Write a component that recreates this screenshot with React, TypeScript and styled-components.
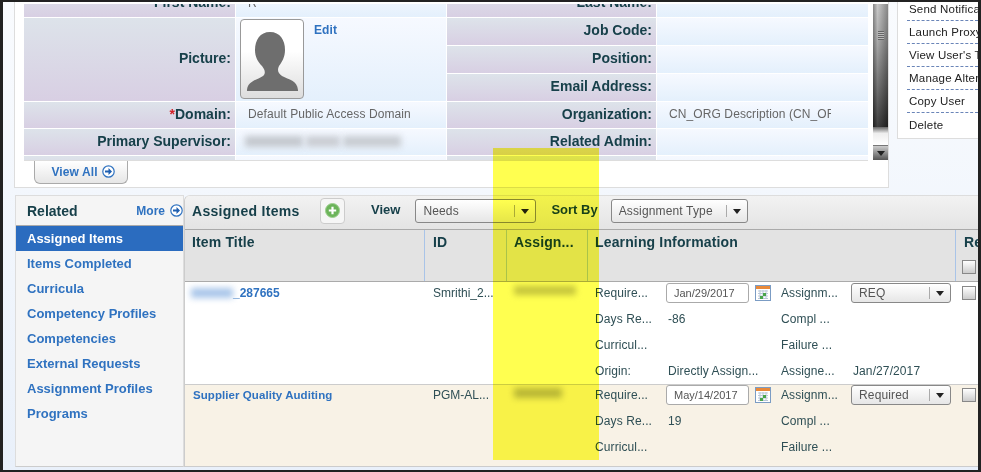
import React, { FunctionComponent } from 'react';
import styled, { createGlobalStyle } from 'styled-components';

const GlobalStyle = createGlobalStyle`
    html, body {
        margin: 0;
        padding: 0;
        background: #222;
    }
    body {
        font-family: 'Liberation Sans', Arial, sans-serif;
    }
`;

const Frame = styled.div`
    position: relative;
    width: 981px;
    height: 472px;
    padding: 2px 3px 2px 3px;
    box-sizing: border-box;
    overflow: hidden;
    background: #222;
`;
const Shell = styled.div`
    height: 468px;
    overflow: hidden;
    background: linear-gradient(#f9fbfe, #f0f5fc 60%, #e9f0fa);
`;
const Highlight = styled.div`
    position: absolute;
    left: 493px;
    top: 148px;
    width: 106px;
    height: 312px;
    background: #ffff50;
    mix-blend-mode: multiply;
    pointer-events: none;
`;

/* top part */
const TopSection = styled.div`
    display: flex;
    padding-left: 11px;
`;
const DetailPanel = styled.div`
    width: 875px;
    height: 186px;
    box-sizing: border-box;
    padding: 2px 0 0 9px;
    background: #fff;
    border: 1px solid #ddd;
    border-top: 0;
`;
const ScrollRow = styled.div`
    display: flex;
    gap: 5px;
`;
const FormViewport = styled.div`
    width: 844px;
    height: 157px;
    box-sizing: border-box;
    overflow: hidden;
    border-bottom: 1px solid #ddd;
`;
const FormGrid = styled.div`
    margin-top: -14px;
    display: grid;
    grid-template-columns: 211px 210px 209px 211px;
    grid-template-rows: repeat(4, 27px) 26px 26px 26px;
    gap: 1px;
    background: #fff;
`;
const LabelCell = styled.div<{ $span?: number; $tall?: boolean }>`
    grid-row: span ${(p) => p.$span || 1};
    display: flex;
    align-items: center;
    justify-content: flex-end;
    padding: 0 4px ${(p) => (p.$tall ? '4px' : '2px')} 0;
    font-size: 14px;
    font-weight: bold;
    color: #17404a;
    background: linear-gradient(#dde3ea, #d8cfe3);
`;
const ValueCell = styled.div<{ $span?: number }>`
    grid-row: span ${(p) => p.$span || 1};
    display: flex;
    align-items: center;
    padding: 0 0 2px 12px;
    font-size: 12px;
    letter-spacing: 0.1px;
    color: #666;
    background: linear-gradient(#f6f9ff, #e4f0fc);
`;
const PictureCell = styled(ValueCell)`
    align-items: flex-start;
    padding: 1px 0 0 4px;
    gap: 10px;
`;
const Clipped = styled.span<{ $w: number }>`
    display: block;
    width: ${(p) => p.$w}px;
    overflow: hidden;
    white-space: nowrap;
`;
const Required = styled.span`
    color: #d3232a;
`;
const AvatarFrame = styled.div`
    width: 64px;
    height: 80px;
    box-sizing: border-box;
    border: 1px solid #999;
    border-radius: 4px;
    background: linear-gradient(#fff 40%, #ddd);
    overflow: hidden;
`;
const EditLink = styled.a`
    margin-top: 4px;
    font-size: 12px;
    font-weight: bold;
    color: #2f72c0;
`;
const BlurGroup = styled.div`
    display: flex;
    gap: 3px;
    margin-left: -3px;
`;
const Blur = styled.div<{ $w: number; $h: number; $c: string }>`
    width: ${(p) => p.$w}px;
    height: ${(p) => p.$h}px;
    flex: none;
    background: ${(p) => p.$c};
    filter: blur(3px);
`;
const Scrollbar = styled.div`
    width: 15px;
    height: 156px;
    display: flex;
    flex-direction: column;
`;
const ScrollThumb = styled.div`
    flex: 1;
    padding-top: 27px;
    background: linear-gradient(90deg, rgba(0, 0, 0, 0.3), rgba(255, 255, 255, 0.1) 30%, rgba(0, 0, 0, 0.3)),
        linear-gradient(#c4c4c4, #a0a0a0 30%, #666 65%, #2a2a2a 100%);
`;
const Grip = styled.div`
    width: 6px;
    height: 9px;
    margin-left: 5px;
    background: repeating-linear-gradient(#666 0 1px, #bbb 1px 2px);
`;
const ScrollTrack = styled.div`
    height: 18px;
    background: linear-gradient(#666, #eee 35%, #fff);
`;
const ScrollButton = styled.div`
    height: 15px;
    display: flex;
    align-items: center;
    justify-content: center;
    background: linear-gradient(#ccc, #555);
    border-top: 1px solid #777;
    box-sizing: border-box;
`;
const ViewAllButton = styled.div`
    width: 94px;
    height: 23px;
    box-sizing: border-box;
    margin-left: 10px;
    display: flex;
    align-items: center;
    justify-content: center;
    gap: 4px;
    padding: 0 0 1px 4px;
    border: 1px solid #aaa;
    border-top: 0;
    border-radius: 0 0 6px 6px;
    background: linear-gradient(#fff, #e6e6e6);
    font-size: 12px;
    font-weight: bold;
    letter-spacing: 0.1px;
    color: #2f72c0;
`;
const ActionMenu = styled.div`
    flex: 1;
    margin-left: 8px;
    height: 137px;
    box-sizing: border-box;
    padding-left: 9px;
    background: #fff;
    border-left: 1px solid #ddd;
    border-bottom: 1px solid #ddd;
    overflow: hidden;
`;
const ActionItem = styled.div`
    height: 23px;
    box-sizing: border-box;
    padding-left: 2px;
    display: flex;
    align-items: center;
    font-size: 11.5px;
    letter-spacing: 0.2px;
    white-space: nowrap;
    color: #222;
    border-bottom: 1px dashed #6a85b8;
    &:first-child {
        margin-top: -4px;
    }
    &:last-child {
        border-bottom: 0;
    }
`;

/* lower part */
const LowerSection = styled.div`
    display: flex;
    margin: 7px 0 0 12px;
    height: 272px;
`;
const SidePanel = styled.div`
    width: 169px;
    flex: none;
    box-sizing: border-box;
    background: #f5f5f5;
    border: 1px solid #ddd;
    border-bottom: 1px solid #ccc;
`;
const SideHeader = styled.div`
    height: 30px;
    box-sizing: border-box;
    padding: 0 0 0 11px;
    display: flex;
    align-items: center;
    justify-content: space-between;
    border-bottom: 1px solid #aaa;
`;
const SideTitle = styled.span`
    font-size: 14px;
    font-weight: bold;
    color: #17404a;
`;
const MoreLink = styled.span`
    display: flex;
    align-items: center;
    gap: 5px;
    font-size: 12px;
    font-weight: bold;
    color: #2f72c0;
`;
const SideLink = styled.div<{ $active?: boolean }>`
    height: 25px;
    padding-left: 11px;
    display: flex;
    align-items: center;
    font-size: 13px;
    font-weight: bold;
    color: ${(p) => (p.$active ? '#fff' : '#2f72c0')};
    background: ${(p) => (p.$active ? '#2b6cbf' : 'transparent')};
`;
const MainPanel = styled.div`
    flex: 1;
    min-width: 0;
    overflow: hidden;
    border-top: 1px solid #ddd;
    border-bottom: 1px solid #ccc;
    border-left: 1px solid #ccc;
    border-radius: 6px 0 0 0;
    background: #f8f2e6;
`;
const Toolbar = styled.div`
    height: 34px;
    box-sizing: border-box;
    display: flex;
    align-items: center;
    padding: 0 0 4px 7px;
    background: linear-gradient(#f2f2f2, #e4e4e4);
    border-bottom: 1px solid #aaa;
`;
const ToolbarTitle = styled.span`
    width: 128px;
    flex: none;
    font-size: 14px;
    font-weight: bold;
    letter-spacing: 0.3px;
    color: #17404a;
`;
const AddButton = styled.div`
    width: 25px;
    height: 26px;
    box-sizing: border-box;
    flex: none;
    display: flex;
    align-items: center;
    justify-content: center;
    background: #f6f6f6;
    border: 1px solid #ccc;
    border-radius: 4px;
`;
const ToolbarLabel = styled.span<{ $left: number; $right: number }>`
    margin: 0 ${(p) => p.$right}px 0 ${(p) => p.$left}px;
    padding-bottom: 3px;
    font-size: 13px;
    font-weight: bold;
    color: #17404a;
`;
const DropField = styled.div<{ $w: number; $h: number; $dividerAt: number }>`
    width: ${(p) => p.$w}px;
    height: ${(p) => p.$h}px;
    box-sizing: border-box;
    flex: none;
    display: grid;
    grid-template-columns: ${(p) => p.$dividerAt}px 1fr;
    align-items: center;
    padding-left: 7px;
    font-size: 12px;
    letter-spacing: 0.15px;
    color: #555;
    background: linear-gradient(#fff, #e6e6e6);
    border: 1px solid #888;
    border-radius: 3px;
`;
const DropArrow = styled.span`
    height: 12px;
    border-left: 1px solid #aaa;
    display: flex;
    align-items: center;
    justify-content: center;
    &::after {
        content: '';
        border-left: 4px solid transparent;
        border-right: 4px solid transparent;
        border-top: 5px solid #222;
        margin-top: 1px;
    }
`;
const ScrollArrow = styled(DropArrow)`
    border-left: 0;
`;

const columns = '240px 82px 81px 368px 1fr';

const HeadRow = styled.div`
    height: 52px;
    box-sizing: border-box;
    display: grid;
    grid-template-columns: ${columns};
    background: #e3e3e3;
    border-bottom: 1px solid #aaa;
`;
const HeadCell = styled.div<{ $last?: boolean }>`
    padding: 4px 0 0 7px;
    font-size: 14px;
    font-weight: bold;
    letter-spacing: 0.15px;
    color: #17404a;
    overflow: hidden;
    white-space: nowrap;
    border-right: ${(p) => (p.$last ? '0' : '1px solid #a9c4e8')};
    &:nth-child(2),
    &:last-child {
        padding-left: 8px;
    }
`;
const Tick = styled.div`
    width: 14px;
    height: 14px;
    box-sizing: border-box;
    background: linear-gradient(#fff, #ccc);
    border: 1px solid #888;
`;
const HeadTick = styled(Tick)`
    margin: 10px 0 0 -2px;
`;
const DataRow = styled.div<{ $tint?: boolean; $h: number }>`
    height: ${(p) => p.$h}px;
    overflow: hidden;
    display: grid;
    grid-template-columns: ${columns};
    background: ${(p) => (p.$tint ? '#f8f2e6' : '#fff')};
    box-shadow: ${(p) => (p.$tint ? 'inset 0 1px 0 #ccc' : 'none')};
`;
const DataCell = styled.div`
    padding: 4px 0 0 7px;
    font-size: 12px;
    line-height: 14px;
    color: #2f4f55;
    white-space: nowrap;
    overflow: hidden;
    &:nth-child(2) {
        padding-left: 8px;
    }
`;
const TitleLink = styled.a<{ $small?: boolean }>`
    display: flex;
    align-items: center;
    padding-left: 1px;
    font-size: ${(p) => (p.$small ? '11.5px' : '12px')};
    letter-spacing: ${(p) => (p.$small ? '0.07px' : '0')};
    font-weight: bold;
    color: #2f72c0;
`;
const TitleBlur = styled(Blur)`
    margin-left: -2px;
`;
const InfoCell = styled.div`
    margin-top: -2px;
    padding-left: 7px;
    display: grid;
    grid-template-columns: 71px 115px 70px 100px;
    grid-auto-rows: 26px;
    align-items: center;
    font-size: 12px;
    letter-spacing: 0.1px;
    color: #2f4f55;
    white-space: nowrap;
`;
const InfoValue = styled.span`
    padding-left: 2px;
`;
const DateGroup = styled.div`
    display: flex;
    align-items: center;
    gap: 6px;
`;
const DateInput = styled.div`
    width: 83px;
    height: 20px;
    box-sizing: border-box;
    padding-left: 7px;
    display: flex;
    align-items: center;
    font-size: 11px;
    letter-spacing: 0;
    background: #fff;
    border: 1px solid #aaa;
    border-radius: 3px;
    color: #555;
`;
const TickCell = styled.div`
    padding: 4px 0 0 6px;
`;

const ArrowCircle: FunctionComponent<{ size?: number }> = ({ size = 13 }) => (
    <svg width={size} height={size} viewBox='0 0 13 13'>
        <circle cx='6.5' cy='6.5' r='5.7' fill='#fff' stroke='#2f72c0' strokeWidth='1.2' />
        <path d='M3 5.5h3.5V3l3.5 3.5L6.5 10V7.5H3z' fill='#1f5fb0' />
    </svg>
);

const Silhouette: FunctionComponent = () => (
    <svg width='62' height='78' viewBox='0 0 62 78'>
        <path
            d='M29 12C39 12 44 20 44 30C44 37 41 42 38 46C36 50 37 53 41 56C48 60 56 60 57 70V71H6V70C7 61 16 60 22 56C25 53 24 50 21 46C17 42 14 37 14 30C14 20 19 12 29 12Z'
            fill='#6e6e6e'
        />
    </svg>
);

const CalendarIcon: FunctionComponent = () => (
    <svg width='16' height='16' viewBox='0 0 16 16'>
        <rect x='0.5' y='0.5' width='15' height='15' fill='#fff' stroke='#7b9cc4' />
        <rect x='1' y='1' width='14' height='3' fill='#e8893a' />
        <path d='M3 6h10M3 8.5h10M3 11h10M3 13.5h10M5 5v9M8 5v9M11 5v9' stroke='#b9c7d8' />
        <rect x='8' y='8' width='3' height='3' fill='#4aa54a' />
        <rect x='5' y='11' width='3' height='3' fill='#4aa54a' />
    </svg>
);

const PlusIcon: FunctionComponent = () => (
    <svg width='15' height='15' viewBox='0 0 15 15'>
        <circle cx='7.5' cy='7.5' r='7' fill='#6cb45a' stroke='#9ccf8e' />
        <path d='M7.5 3.8v7.4M3.8 7.5h7.4' stroke='#fff' strokeWidth='2.2' />
    </svg>
);

const sideLinks = [
    'Assigned Items',
    'Items Completed',
    'Curricula',
    'Competency Profiles',
    'Competencies',
    'External Requests',
    'Assignment Profiles',
    'Programs',
];
const actions = ['Send Notifica', 'Launch Proxy', "View User's T", 'Manage Alter', 'Copy User', 'Delete'];

interface LearningProps {
    date: string;
    days: string;
    type: string;
    origin?: boolean;
}

const LearningInfo: FunctionComponent<LearningProps> = ({ date, days, type, origin }) => (
    <InfoCell>
        <span>Require...</span>
        <DateGroup>
            <DateInput>{date}</DateInput>
            <CalendarIcon />
        </DateGroup>
        <span>Assignm...</span>
        <DropField $w={100} $h={20} $dividerAt={70}>
            <span>{type}</span>
            <DropArrow />
        </DropField>
        <span>Days Re...</span>
        <InfoValue>{days}</InfoValue>
        <span>Compl ...</span>
        <span />
        <span>Curricul...</span>
        <span />
        <span>Failure ...</span>
        <span />
        {origin && (
            <>
                <span>Origin:</span>
                <InfoValue>Directly Assign...</InfoValue>
                <span>Assigne...</span>
                <InfoValue>Jan/27/2017</InfoValue>
            </>
        )}
    </InfoCell>
);

const App: FunctionComponent = () => {
    return (
        <Frame>
            <GlobalStyle />
            <Shell>
                <TopSection>
                    <DetailPanel>
                        <ScrollRow>
                            <FormViewport>
                                <FormGrid>
                                    <LabelCell $tall>First Name:</LabelCell>
                                    <ValueCell>R</ValueCell>
                                    <LabelCell $tall>Last Name:</LabelCell>
                                    <ValueCell>'</ValueCell>

                                    <LabelCell $span={3} $tall>
                                        Picture:
                                    </LabelCell>
                                    <PictureCell $span={3}>
                                        <AvatarFrame>
                                            <Silhouette />
                                        </AvatarFrame>
                                        <EditLink>Edit</EditLink>
                                    </PictureCell>
                                    <LabelCell $tall>Job Code:</LabelCell>
                                    <ValueCell />
                                    <LabelCell $tall>Position:</LabelCell>
                                    <ValueCell />
                                    <LabelCell $tall>Email Address:</LabelCell>
                                    <ValueCell />

                                    <LabelCell>
                                        <Required>*</Required>Domain:
                                    </LabelCell>
                                    <ValueCell>
                                        <Clipped $w={162}>Default Public Access Domain</Clipped>
                                    </ValueCell>
                                    <LabelCell>Organization:</LabelCell>
                                    <ValueCell>
                                        <Clipped $w={162}>CN_ORG Description (CN_OR</Clipped>
                                    </ValueCell>

                                    <LabelCell>Primary Supervisor:</LabelCell>
                                    <ValueCell>
                                        <BlurGroup>
                                            <Blur $w={58} $h={11} $c='#c4c8ce' />
                                            <Blur $w={34} $h={11} $c='#cacdd3' />
                                            <Blur $w={58} $h={11} $c='#c8ccd2' />
                                        </BlurGroup>
                                    </ValueCell>
                                    <LabelCell>Related Admin:</LabelCell>
                                    <ValueCell />

                                    <LabelCell />
                                    <ValueCell />
                                    <LabelCell />
                                    <ValueCell />
                                </FormGrid>
                            </FormViewport>
                            <Scrollbar>
                                <ScrollThumb>
                                    <Grip />
                                </ScrollThumb>
                                <ScrollTrack />
                                <ScrollButton>
                                    <ScrollArrow />
                                </ScrollButton>
                            </Scrollbar>
                        </ScrollRow>
                        <ViewAllButton>
                            View All <ArrowCircle />
                        </ViewAllButton>
                    </DetailPanel>
                    <ActionMenu>
                        {actions.map((a) => (
                            <ActionItem key={a}>{a}</ActionItem>
                        ))}
                    </ActionMenu>
                </TopSection>

                <LowerSection>
                    <SidePanel>
                        <SideHeader>
                            <SideTitle>Related</SideTitle>
                            <MoreLink>
                                More <ArrowCircle />
                            </MoreLink>
                        </SideHeader>
                        {sideLinks.map((l, i) => (
                            <SideLink key={l} $active={i === 0}>
                                {l}
                            </SideLink>
                        ))}
                    </SidePanel>
                    <MainPanel>
                        <Toolbar>
                            <ToolbarTitle>Assigned Items</ToolbarTitle>
                            <AddButton>
                                <PlusIcon />
                            </AddButton>
                            <ToolbarLabel $left={26} $right={15}>
                                View
                            </ToolbarLabel>
                            <DropField $w={121} $h={24} $dividerAt={91}>
                                <span>Needs</span>
                                <DropArrow />
                            </DropField>
                            <ToolbarLabel $left={15} $right={13}>
                                Sort By
                            </ToolbarLabel>
                            <DropField $w={137} $h={24} $dividerAt={107}>
                                <span>Assignment Type</span>
                                <DropArrow />
                            </DropField>
                        </Toolbar>
                        <HeadRow>
                            <HeadCell>Item Title</HeadCell>
                            <HeadCell>ID</HeadCell>
                            <HeadCell>Assign...</HeadCell>
                            <HeadCell>Learning Information</HeadCell>
                            <HeadCell $last>
                                Re
                                <HeadTick />
                            </HeadCell>
                        </HeadRow>
                        <DataRow $h={102}>
                            <DataCell>
                                <TitleLink>
                                    <TitleBlur $w={42} $h={10} $c='#a9c6ea' />
                                    _287665
                                </TitleLink>
                            </DataCell>
                            <DataCell>Smrithi_2...</DataCell>
                            <DataCell>
                                <Blur $w={62} $h={9} $c='#c4c4bc' />
                            </DataCell>
                            <LearningInfo date='Jan/29/2017' days='-86' type='REQ' origin />
                            <TickCell>
                                <Tick />
                            </TickCell>
                        </DataRow>
                        <DataRow $tint $h={83}>
                            <DataCell>
                                <TitleLink $small>Supplier Quality Auditing</TitleLink>
                            </DataCell>
                            <DataCell>PGM-AL...</DataCell>
                            <DataCell>
                                <Blur $w={48} $h={10} $c='#b8b6a6' />
                            </DataCell>
                            <LearningInfo date='May/14/2017' days='19' type='Required' />
                            <TickCell>
                                <Tick />
                            </TickCell>
                        </DataRow>
                    </MainPanel>
                </LowerSection>
            </Shell>
            <Highlight />
        </Frame>
    );
};

export default App;
